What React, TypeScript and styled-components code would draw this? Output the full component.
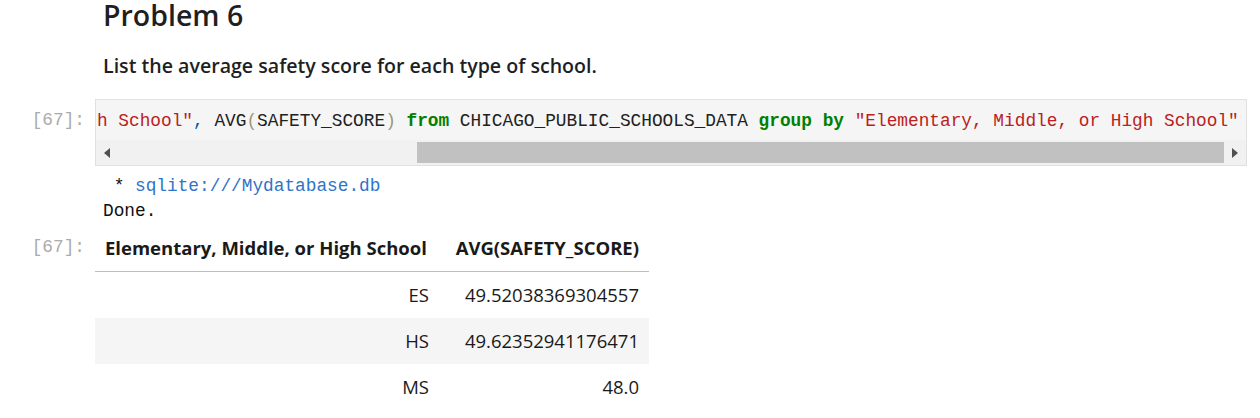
import React from "react";
import styled, { createGlobalStyle } from "styled-components";

const Global = createGlobalStyle`
  html, body { margin: 0; padding: 0; background: #ffffff; }
  body { width: 1260px; height: 418px; overflow: hidden; font-family: "Open Sans", "Noto Sans", sans-serif; color: #212121; }
`;

const Notebook = styled.div`
  display: flex;
  flex-direction: column;
`;

const Cell = styled.div<{ $mt?: number }>`
  display: flex;
  flex-direction: row;
  align-items: flex-start;
  margin-top: ${(p) => p.$mt ?? 0}px;
`;

const Prompt = styled.div<{ $pt?: number }>`
  width: 95px;
  flex: 0 0 95px;
  box-sizing: border-box;
  padding-right: 10px;
  padding-top: ${(p) => p.$pt ?? 0}px;
  text-align: right;
  font-family: "Liberation Mono", "DejaVu Sans Mono", monospace;
  font-size: 17.8px;
  line-height: 24px;
  color: #ababab;
`;

const Markdown = styled.div`
  padding-left: 8px;
`;

const Heading = styled.h2`
  margin: 0;
  font-size: 28.5px;
  font-weight: 600;
  line-height: 30px;
  color: #1f1f1f;
`;

const Para = styled.p`
  margin: 23px 0 0 0;
  font-size: 19.6px;
  font-weight: 600;
  line-height: 26px;
  color: #1f1f1f;
`;

const CodeBox = styled.div`
  width: 1152px;
  box-sizing: border-box;
  border: 1px solid #e0e0e0;
  background: #f5f5f5;
  display: flex;
  flex-direction: column;
`;

const CodeLine = styled.pre`
  margin: 0;
  height: 40px;
  padding-left: 1px;
  overflow: hidden;
  white-space: pre;
  font-family: "Liberation Mono", "DejaVu Sans Mono", monospace;
  font-size: 17.8px;
  line-height: 42px;
  color: #212121;
`;

const Tok = styled.span<{ $c: string; $b?: boolean }>`
  color: ${(p) => p.$c};
  font-weight: ${(p) => (p.$b ? 700 : 400)};
`;

const ScrollBar = styled.div`
  height: 25px;
  background: #f1f1f1;
  display: flex;
  flex-direction: row;
  align-items: center;
`;

const ArrowBtn = styled.div`
  width: 22px;
  flex: 0 0 22px;
  height: 25px;
  display: flex;
  align-items: center;
  justify-content: center;
`;

const Track = styled.div`
  flex: 1;
  height: 21px;
  display: flex;
  flex-direction: row;
`;

const Thumb = styled.div<{ $left: number }>`
  margin-left: ${(p) => p.$left}px;
  flex: 1;
  background: #c1c1c1;
`;

const Output = styled.div`
  padding-left: 8px;
  font-family: "Liberation Mono", "DejaVu Sans Mono", monospace;
  font-size: 17.8px;
  line-height: 25px;
  color: #111111;
  white-space: pre;
`;

const Link = styled.span`
  color: #2f74c8;
`;

const Table = styled.table`
  border-collapse: collapse;
  table-layout: fixed;
  width: 554px;
  font-family: "Open Sans", "Noto Sans", sans-serif;
  font-size: 18.5px;
  color: #1a1a1a;
`;

const Th = styled.th<{ $w: number; $align: string }>`
  width: ${(p) => p.$w}px;
  box-sizing: border-box;
  height: 46px;
  padding: 0 10px;
  text-align: ${(p) => p.$align};
  font-weight: 700;
  border-bottom: 1px solid #bdbdbd;
  white-space: nowrap;
`;

const Tr = styled.tr<{ $striped?: boolean }>`
  background: ${(p) => (p.$striped ? "#f5f5f5" : "transparent")};
`;

const Td = styled.td`
  height: 46px;
  padding: 0 10px;
  text-align: right;
  white-space: nowrap;
`;

const Arrow = ({ dir }: { dir: "left" | "right" }) => (
  <svg width="6" height="10" viewBox="0 0 6 10">
    {dir === "left" ? (
      <polygon points="6,0 6,10 0,5" fill="#505050" />
    ) : (
      <polygon points="0,0 0,10 6,5" fill="#505050" />
    )}
  </svg>
);

const rows = [
  ["ES", "49.52038369304557"],
  ["HS", "49.62352941176471"],
  ["MS", "48.0"],
];

export default function App() {
  return (
    <Notebook>
      <Global />
      <Cell>
        <Prompt />
        <Markdown>
          <Heading>Problem 6</Heading>
          <Para>List the average safety score for each type of school.</Para>
        </Markdown>
      </Cell>
      <Cell $mt={20}>
        <Prompt $pt={9}>[67]:</Prompt>
        <CodeBox>
          <CodeLine>
            <Tok $c="#ba2121">h School"</Tok>
            <Tok $c="#0055aa">,</Tok>
            <Tok $c="#212121"> AVG</Tok>
            <Tok $c="#999977">(</Tok>
            <Tok $c="#212121">SAFETY_SCORE</Tok>
            <Tok $c="#999977">)</Tok>{" "}
            <Tok $c="#008000" $b>from</Tok>
            <Tok $c="#212121"> CHICAGO_PUBLIC_SCHOOLS_DATA </Tok>
            <Tok $c="#008000" $b>group</Tok>{" "}
            <Tok $c="#008000" $b>by</Tok>{" "}
            <Tok $c="#ba2121">"Elementary, Middle, or High School"</Tok>
          </CodeLine>
          <ScrollBar>
            <ArrowBtn>
              <Arrow dir="left" />
            </ArrowBtn>
            <Track>
              <Thumb $left={299} />
            </Track>
            <ArrowBtn>
              <Arrow dir="right" />
            </ArrowBtn>
          </ScrollBar>
        </CodeBox>
      </Cell>
      <Cell $mt={8}>
        <Prompt />
        <Output>
          {" * "}
          <Link>sqlite:///Mydatabase.db</Link>
          {"\n"}Done.
        </Output>
      </Cell>
      <Cell $mt={1}>
        <Prompt $pt={10}>[67]:</Prompt>
        <Table>
          <thead>
            <tr>
              <Th $w={344} $align="left">Elementary, Middle, or High School</Th>
              <Th $w={210} $align="right">AVG(SAFETY_SCORE)</Th>
            </tr>
          </thead>
          <tbody>
            {rows.map((r, i) => (
              <Tr key={r[0]} $striped={i % 2 === 1}>
                <Td>{r[0]}</Td>
                <Td>{r[1]}</Td>
              </Tr>
            ))}
          </tbody>
        </Table>
      </Cell>
    </Notebook>
  );
}
